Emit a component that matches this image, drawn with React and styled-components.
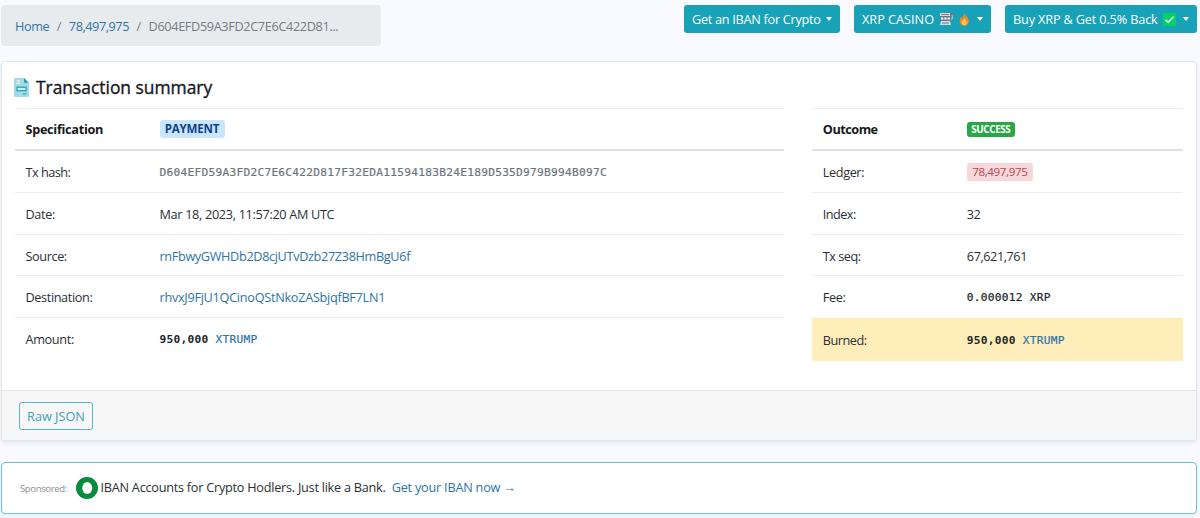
import React from "react";
import styled, { createGlobalStyle } from "styled-components";

const Global = createGlobalStyle`
  *, *::before, *::after { box-sizing: border-box; }
  body {
    margin: 0;
    background: #f9faff;
    color: #2b3035;
    font-family: "Open Sans", "Noto Sans", sans-serif;
    font-size: 12.7px;
    line-height: 20px;
    overflow: hidden;
  }
`;

const Page = styled.div`
  display: flex;
  flex-direction: column;
  width: 1200px;
  height: 518px;
  padding: 5px 3px 0 1px;
`;

const TopBar = styled.header`
  display: flex;
  justify-content: space-between;
  align-items: flex-start;
  height: 56px;
`;

const Breadcrumb = styled.nav`
  display: flex;
  align-items: center;
  width: 380px;
  height: 41px;
  padding: 1px 14px 0;
  border-radius: 4px;
  background: #e8ebee;
  color: #747b82;
`;

const Slash = styled.span`
  width: 19.6px;
  text-align: center;
`;

const Text = styled.span`
  white-space: pre;
  letter-spacing: ${(p) => p.$track || 0}px;
`;

const Link = styled.a`
  color: #2d74a8;
  text-decoration: none;
  white-space: pre;
  letter-spacing: ${(p) => p.$track || 0}px;
`;

const Actions = styled.div`
  display: flex;
  gap: 14px;
`;

const ActionButton = styled.button`
  display: flex;
  align-items: center;
  width: ${(p) => p.$width}px;
  height: 28px;
  padding: 0 8px;
  border: 0;
  border-radius: 3px;
  background: #18a2b8;
  color: #fff;
  font: inherit;
  white-space: pre;

  svg { margin-left: 5px; flex: none; }
`;

const Caret = styled.i`
  margin-left: auto;
  border: 3.6px solid transparent;
  border-top: 4px solid #fff;
  border-bottom: 0;
`;

const Card = styled.section`
  display: flex;
  flex-direction: column;
  height: 380px;
  border: 1px solid #e1e4e8;
  border-radius: 4px;
  background: #fff;
  box-shadow: 0 2px 4px rgba(40, 50, 70, 0.1);
  overflow: hidden;
`;

const Title = styled.h1`
  display: flex;
  align-items: center;
  gap: 7px;
  height: 46px;
  margin: 0;
  padding: 4px 0 0 12px;
  color: #16191c;
  font-size: 17.4px;
  font-weight: 500;
  -webkit-text-stroke: 0.35px currentColor;
`;

const Tables = styled.div`
  display: flex;
  gap: 28px;
  flex: 1;
  padding: 0 13.5px 0 12.5px;
`;

const Table = styled.div`
  width: ${(p) => p.$width}px;
`;

const Row = styled.div`
  display: grid;
  grid-template-columns: ${(p) => p.$label}px 1fr;
  align-items: center;
  height: ${(p) => p.$height || 42}px;
  padding: ${(p) => (p.$last ? 0 : 1)}px 11px 0;
  border-top: ${(p) => (p.$first ? "0" : "1px solid #e9ecef")};
  ${(p) => p.$burned && "background: #ffedba; border-top-color: #ffe9a8;"}
`;

const HeadRow = styled(Row)`
  padding-top: 0;
  border-top: 1px solid #e9ecef;
  border-bottom: 2px solid #dee2e6;
  color: #16191c;
  font-weight: 700;
`;

const Value = styled.div`
  display: flex;
  align-items: center;
`;

const Mono = styled.span`
  padding-top: 1px;
  color: ${(p) => p.$color || "#212529"};
  font-family: "DejaVu Sans Mono", monospace;
  font-size: 11.2px;
  font-weight: ${(p) => (p.$bold ? 700 : 400)};
  letter-spacing: 0.257px;
  white-space: pre;
  -webkit-text-stroke: ${(p) => (p.$bold ? 0 : 0.2)}px currentColor;
`;

const Badge = styled.span`
  display: flex;
  align-items: center;
  justify-content: center;
  width: ${(p) => p.$width}px;
  height: ${(p) => p.$height}px;
  border-radius: 3px;
  background: ${(p) => p.$bg};
  color: ${(p) => p.$color};
  font-size: ${(p) => p.$size}px;
  font-weight: ${(p) => p.$weight || 400};
`;

const CardFooter = styled.footer`
  display: flex;
  align-items: center;
  height: 50px;
  padding: 0 17px;
  border-top: 1px solid #e1e2e3;
  background: #f7f7f7;
`;

const OutlineButton = styled.button`
  width: 74px;
  height: 28px;
  padding: 0;
  border: 1px solid #54b7c9;
  border-radius: 3px;
  background: transparent;
  color: #3ba3b7;
  font: inherit;
`;

const Sponsor = styled.aside`
  display: flex;
  align-items: center;
  height: 52px;
  margin-top: 21px;
  padding: 0 18px;
  border: 1px solid #6fc1d1;
  border-radius: 4px;
  background: #fff;
  box-shadow: 0 2px 4px rgba(40, 50, 70, 0.07);
`;

const SponsorLabel = styled.span`
  width: 55.5px;
  padding-top: 2px;
  color: #8b8f93;
  font-size: 9.6px;
  letter-spacing: -0.4px;
  white-space: nowrap;
`;

const SponsorText = styled.span`
  padding: 0 0 2px 3px;
  white-space: pre;
`;

const SlotIcon = () => (
  <svg width="15" height="14" viewBox="0 0 15 14">
    <path d="M1 1h10v3H1z" fill="#d9dce4" />
    <path d="M2 2h8v1H2z" fill="#c4606c" />
    <path d="M1 4.500h11v4H1z" fill="#7b6b80" />
    <path d="M2 5.500h2.300v2H2zM5.300 5.500h2.300v2H5.300zM8.600 5.500h2.300v2H8.600z" fill="#fff" />
    <path d="M2 9h9l1 4H1z" fill="#d9dce4" />
    <path d="M3 10.500h7v1H3z" fill="#7b6b80" />
    <path d="M12 7h1.300V3" fill="none" stroke="#c8ccd6" />
    <circle cx="13.200" cy="2.200" r="1.200" fill="#e14a5a" />
  </svg>
);

const FireIcon = () => (
  <svg width="11" height="13" viewBox="0 0 11 13">
    <path d="M5 0c.4 2.300 4.800 4 4.800 8.200 0 2.800-2 4.600-4.500 4.600S.7 11 .7 8.300c0-1.900.7-3.300 1.500-4.200l.9 1.500C4.600 4 4.800 2 5 0z" fill="#f48a24" />
    <path d="M5.600 5.300c.3 1.500 2.200 2.300 2.200 4.400 0 1.500-1.100 2.600-2.500 2.600s-2.500-1-2.500-2.500c0-1.800 2.200-2.700 2.800-4.500z" fill="#fdc95a" />
  </svg>
);

const CheckIcon = () => (
  <svg width="13" height="13" viewBox="0 0 13 13">
    <rect width="13" height="13" rx="1.500" fill="#04d165" />
    <path d="M2.500 6.800l2.700 2.700 5.300-5.900" fill="none" stroke="#fff" strokeWidth="1.400" />
  </svg>
);

const DocIcon = () => (
  <svg width="15" height="19" viewBox="0 0 15 19">
    <path d="M1.300 0H10l5 5v12.700c0 .7-.6 1.300-1.300 1.300H1.300C.6 19 0 18.400 0 17.700V1.300C0 .6.6 0 1.300 0z" fill="#a2dae3" />
    <path d="M10 0l4.800 4.800H10z" fill="#18a2b8" />
    <path d="M2.500 2.900H6M2.500 5.300H6" stroke="#e4f5f8" strokeWidth="1.200" />
    <rect x="3" y="9.200" width="9" height="3.500" fill="#d9f0f4" stroke="#18a2b8" strokeWidth="1.200" />
    <path d="M8.700 16h3.600" stroke="#18a2b8" strokeWidth="1.200" />
  </svg>
);

const SponsorLogo = () => (
  <svg width="22" height="22" viewBox="0 0 22 22">
    <circle cx="11" cy="11" r="11" fill="#058a3e" />
    <ellipse cx="11.200" cy="11" rx="5" ry="6" fill="#fff" />
  </svg>
);

export default function App() {
  return (
    <>
      <Global />
      <Page>
        <TopBar>
          <Breadcrumb>
            <Link href="#" $track={-0.4}>Home</Link>
            <Slash>/</Slash>
            <Link href="#" $track={-0.45}>78,497,975</Link>
            <Slash>/</Slash>
            <Text $track={-0.35}>D604EFD59A3FD2C7E6C422D81...</Text>
          </Breadcrumb>
          <Actions>
            <ActionButton $width={156}><Text $track={-0.28}>Get an IBAN for Crypto</Text><Caret /></ActionButton>
            <ActionButton $width={137}><Text>XRP CASINO</Text><SlotIcon /><FireIcon /><Caret /></ActionButton>
            <ActionButton $width={192}><Text $track={-0.15}>Buy XRP &amp; Get 0.5% Back</Text><CheckIcon /><Caret /></ActionButton>
          </Actions>
        </TopBar>

        <Card>
          <Title><DocIcon /><Text>Transaction summary</Text></Title>
          <Tables>
            <Table $width={770}>
              <HeadRow $label={134} $height={43}>
                <Text $track={-0.3}>Specification</Text>
                <Value><Badge $width={65} $height={18} $bg="#cce5ff" $color="#0a4388" $size={11.6} $weight={700}><Text $track={-0.25}>PAYMENT</Text></Badge></Value>
              </HeadRow>
              <Row $label={134} $height={41} $first><Text $track={-0.5}>Tx hash:</Text><Mono $color="#6c757d">D604EFD59A3FD2C7E6C422D817F32EDA11594183B24E189D535D979B994B097C</Mono></Row>
              <Row $label={134}><Text $track={-0.35}>Date:</Text><Text $track={-0.32}>Mar 18, 2023, 11:57:20 AM UTC</Text></Row>
              <Row $label={134} $height={41}><Text $track={-0.4}>Source:</Text><Link href="#" $track={-0.35}>rnFbwyGWHDb2D8cjUTvDzb27Z38HmBgU6f</Link></Row>
              <Row $label={134}><Text $track={-0.38}>Destination:</Text><Link href="#" $track={-0.28}>rhvxJ9FjU1QCinoQStNkoZASbjqfBF7LN1</Link></Row>
              <Row $label={134} $height={43} $last><Text $track={-0.35}>Amount:</Text><Value><Mono $bold>950,000 </Mono><Mono $color="#2d74a8">XTRUMP</Mono></Value></Row>
            </Table>
            <Table $width={371}>
              <HeadRow $label={144} $height={43}>
                <Text $track={-0.5}>Outcome</Text>
                <Value><Badge $width={48} $height={15} $bg="#28a745" $color="#fff" $size={9.9} $weight={700}><Text $track={-0.4}>SUCCESS</Text></Badge></Value>
              </HeadRow>
              <Row $label={144} $height={41} $first><Text $track={-0.4}>Ledger:</Text><Badge $width={66} $height={18} $bg="#f8d7da" $color="#b04a52" $size={11.6}><Text $track={-0.38}>78,497,975</Text></Badge></Row>
              <Row $label={144}><Text $track={-0.55}>Index:</Text><Text $track={-0.5}>32</Text></Row>
              <Row $label={144} $height={41}><Text $track={-0.5}>Tx seq:</Text><Text $track={-0.45}>67,621,761</Text></Row>
              <Row $label={144} $height={43} $last><Text $track={-0.4}>Fee:</Text><Mono>0.000012 XRP</Mono></Row>
              <Row $label={144} $height={43} $burned $last><Text $track={-0.5}>Burned:</Text><Value><Mono $bold>950,000 </Mono><Mono $color="#2d74a8">XTRUMP</Mono></Value></Row>
            </Table>
          </Tables>
          <CardFooter><OutlineButton><Text>Raw JSON</Text></OutlineButton></CardFooter>
        </Card>

        <Sponsor>
          <SponsorLabel>Sponsored:</SponsorLabel>
          <SponsorLogo />
          <SponsorText><Text $track={-0.25}>IBAN Accounts for Crypto Hodlers. Just like a Bank.  </Text><Link href="#" $track={-0.22}>Get your IBAN now →</Link></SponsorText>
        </Sponsor>
      </Page>
    </>
  );
}
